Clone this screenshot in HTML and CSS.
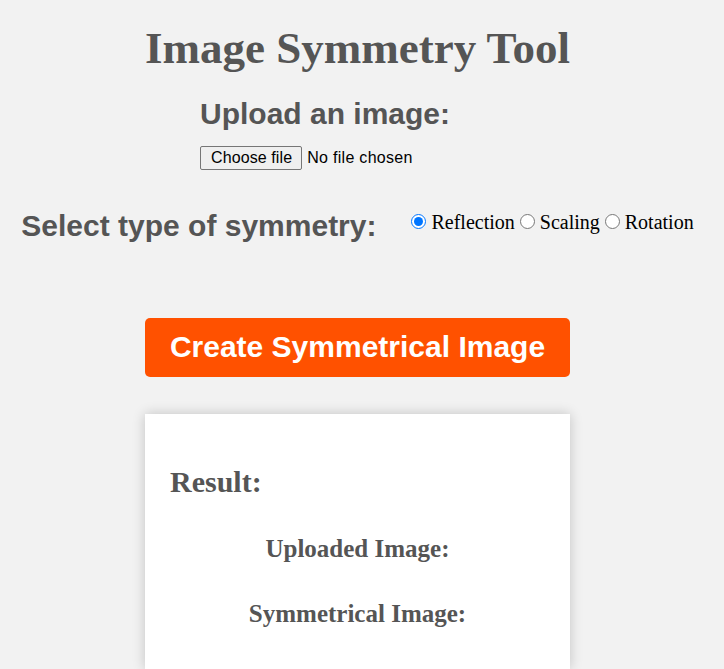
FILE: index.html
```html
<!DOCTYPE html>
<html lang="en">
<head>
<meta charset="utf-8">
<title>Image Symmetry Tool</title>
<link rel="stylesheet" href="styles.css">
</head>
<body>
<main class="page">
  <h1 class="title">Image Symmetry Tool</h1>
  <form class="form">
    <div class="upload">
      <label class="label" for="image">Upload an image:</label>
      <div class="file">
        <label class="file-button" for="image">Choose file</label>
        <span class="file-name">No file chosen</span>
        <input type="file" id="image" class="file-input">
      </div>
    </div>
    <div class="symmetry">
      <span class="label">Select type of symmetry:</span>
      <div class="options"><label class="option"><input type="radio" name="sym" checked>Reflection</label><label class="option"><input type="radio" name="sym">Scaling</label><label class="option"><input type="radio" name="sym">Rotation</label></div>
    </div>
    <button type="button" class="create">Create Symmetrical Image</button>
  </form>
  <section class="result">
    <h2 class="result-title">Result:</h2>
    <h3 class="result-sub">Uploaded Image:</h3>
    <h3 class="result-sub">Symmetrical Image:</h3>
  </section>
</main>
</body>
</html>
```
FILE: styles.css
```css
html, body {
  margin: 0;
  padding: 0;
  background: #f2f2f2;
}
body {
  font-family: "Liberation Sans", Arial, sans-serif;
  color: #555555;
}
.page {
  display: flex;
  flex-direction: column;
  align-items: center;
  padding-right: 9px;
}
.title {
  font-family: "Liberation Serif", "Times New Roman", serif;
  font-size: 45px;
  line-height: 52px;
  font-weight: bold;
  margin: 22px 0 0;
  text-align: center;
}
.form {
  display: flex;
  flex-direction: column;
  align-items: center;
  width: 100%;
}
.upload {
  width: 315px;
  display: flex;
  flex-direction: column;
  align-items: flex-start;
  margin-top: 22px;
}
.label {
  font-size: 30px;
  line-height: 36px;
  font-weight: bold;
}
.file {
  margin-top: 14px;
  display: flex;
  align-items: center;
  font-family: "Liberation Sans", Arial, sans-serif;
  font-size: 16px;
  color: #000;
}
.file-button {
  box-sizing: border-box;
  height: 24px;
  line-height: 20px;
  padding: 1px 9px 1px 10px;
  border: 1px solid #767676;
  border-radius: 2px;
  background: #efefef;
  color: #000;
  letter-spacing: 0.1px;
}
.file-name {
  margin-left: 5px;
  letter-spacing: 0.3px;
}
.file-input {
  display: none;
}
.symmetry {
  display: flex;
  align-items: flex-start;
  justify-content: center;
  gap: 30px;
  margin-top: 38px;
}
.options {
  margin-top: 3px;
  font-family: "Liberation Serif", "Times New Roman", serif;
  font-size: 20px;
  color: #000;
  white-space: nowrap;
}
.option input {
  width: 15px;
  height: 15px;
  margin: 3px 5px 0 5px;
}
.create {
  margin-top: 74px;
  width: 425px;
  height: 59px;
  border: none;
  border-radius: 5px;
  background: #ff5100;
  color: #ffffff;
  font-family: "Liberation Sans", Arial, sans-serif;
  font-size: 30px;
  font-weight: bold;
  padding: 0 0 2px;
}
.result {
  margin-top: 37px;
  width: 425px;
  box-sizing: border-box;
  background: #ffffff;
  box-shadow: 0 0 12px rgba(0, 0, 0, 0.2);
  padding: 51px 25px 40px;
  font-family: "Liberation Serif", "Times New Roman", serif;
}
.result-title {
  font-size: 30px;
  line-height: 34px;
  margin: 0;
}
.result-sub {
  font-size: 25px;
  line-height: 30px;
  text-align: center;
  margin: 35px 0 0;
}
```
